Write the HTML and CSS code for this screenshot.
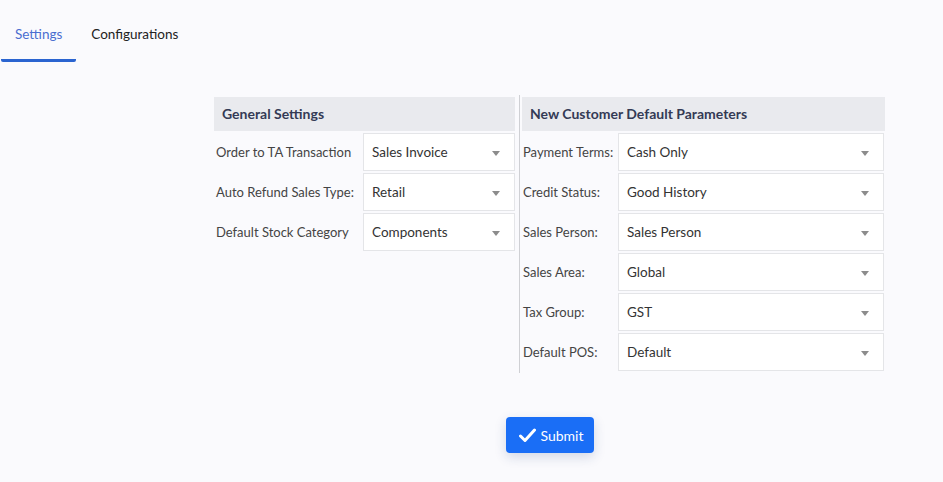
FILE: index.html
```html
<!DOCTYPE html>
<html>
<head>
<meta charset="utf-8">
<link rel="stylesheet" href="styles.css">
</head>
<body>
<nav class="tabs">
  <div class="tab active">Settings</div>
  <div class="tab">Configurations</div>
</nav>
<main class="wrap">
  <div class="panels">
    <section class="panel left">
      <h2 class="panel-head">General Settings</h2>
      <div class="rows">
        <div class="row"><label>Order to TA Transaction</label><div class="select">Sales Invoice<span class="caret"></span></div></div>
        <div class="row"><label>Auto Refund Sales Type:</label><div class="select">Retail<span class="caret"></span></div></div>
        <div class="row"><label>Default Stock Category</label><div class="select">Components<span class="caret"></span></div></div>
      </div>
    </section>
    <div class="divider"></div>
    <section class="panel right">
      <h2 class="panel-head">New Customer Default Parameters</h2>
      <div class="rows">
        <div class="row"><label>Payment Terms:</label><div class="select">Cash Only<span class="caret"></span></div></div>
        <div class="row"><label>Credit Status:</label><div class="select">Good History<span class="caret"></span></div></div>
        <div class="row"><label>Sales Person:</label><div class="select">Sales Person<span class="caret"></span></div></div>
        <div class="row"><label>Sales Area:</label><div class="select">Global<span class="caret"></span></div></div>
        <div class="row"><label>Tax Group:</label><div class="select">GST<span class="caret"></span></div></div>
        <div class="row"><label>Default POS:</label><div class="select">Default<span class="caret"></span></div></div>
      </div>
    </section>
  </div>
  <div class="actions">
    <button class="submit"><svg width="17" height="15" viewBox="0 0 17 15"><path d="M1.5 8 L6 12.5 L15.5 2" fill="none" stroke="#fff" stroke-width="3" stroke-linecap="round" stroke-linejoin="round"/></svg>Submit</button>
  </div>
</main>
</body>
</html>
```

FILE: styles.css
```css
* { box-sizing: border-box; }
html, body { margin: 0; padding: 0; }
body {
  background: #fafafd;
  font-family: "Lato", "Open Sans", sans-serif;
  color: #333;
  width: 943px;
  height: 482px;
  overflow: hidden;
}
.tabs {
  display: flex;
  padding-left: 1px;
  padding-top: 23px;
  height: 62px;
}
.tab {
  font-size: 13.5px;
  color: #222;
  height: 39px;
  padding: 3px 14px 0 14px;
  margin-right: 1px;
}
.tab.active {
  color: #4a6ed0;
  border-bottom: 3px solid #2a64d0;
  border-radius: 0 0 2px 2px;
}
.wrap {
  margin-left: 214px;
  width: 671px;
  padding-top: 33px;
}
.panels {
  display: flex;
  align-items: flex-start;
}
.panel-head {
  margin: 0;
  height: 34px;
  background: #e9eaee;
  font-size: 14px;
  font-weight: 700;
  color: #343a55;
  padding: 0 8px 2px 8px;
  display: flex;
  align-items: center;
}
.panel.left { width: 301px; margin-top: 2px; }
.panel.right { width: 363px; margin-top: 2px; }
.divider {
  width: 1px;
  background: #cfd0d4;
  height: 278px;
  margin: 0 2px 0 4px;
}
.rows { padding-top: 1px; }
.row {
  display: flex;
  align-items: center;
  height: 40px;
}
.row label {
  font-size: 13px;
  color: #444;
  padding-left: 2px;
  white-space: nowrap;
}
.left .row label { width: 149px; }
.right .row label { width: 96px; padding-left: 1px; }
.select {
  position: relative;
  height: 38px;
  background: #fff;
  border: 1px solid #e4e5e8;
  font-size: 13.5px;
  color: #333;
  display: flex;
  align-items: center;
  padding-left: 8px;
  margin-bottom: 1px;
}
.left .select { width: 152px; }
.right .select { width: 266px; }
.caret {
  position: absolute;
  right: 14px;
  top: 17px;
  width: 0; height: 0;
  border-left: 4px solid transparent;
  border-right: 4px solid transparent;
  border-top: 5px solid #8c8c8c;
}
.actions {
  display: flex;
  justify-content: center;
  padding-top: 44px;
  padding-left: 1px;
}
.submit {
  display: flex;
  align-items: center;
  gap: 5px;
  height: 36px;
  width: 88px;
  justify-content: center;
  background: #1a6ef6;
  color: #fff;
  border: none;
  border-radius: 4px;
  font-family: "Lato", sans-serif;
  font-size: 14px;
  box-shadow: 0 4px 12px rgba(30, 60, 120, 0.18);
  padding: 0 0 0 2px;
}
```
